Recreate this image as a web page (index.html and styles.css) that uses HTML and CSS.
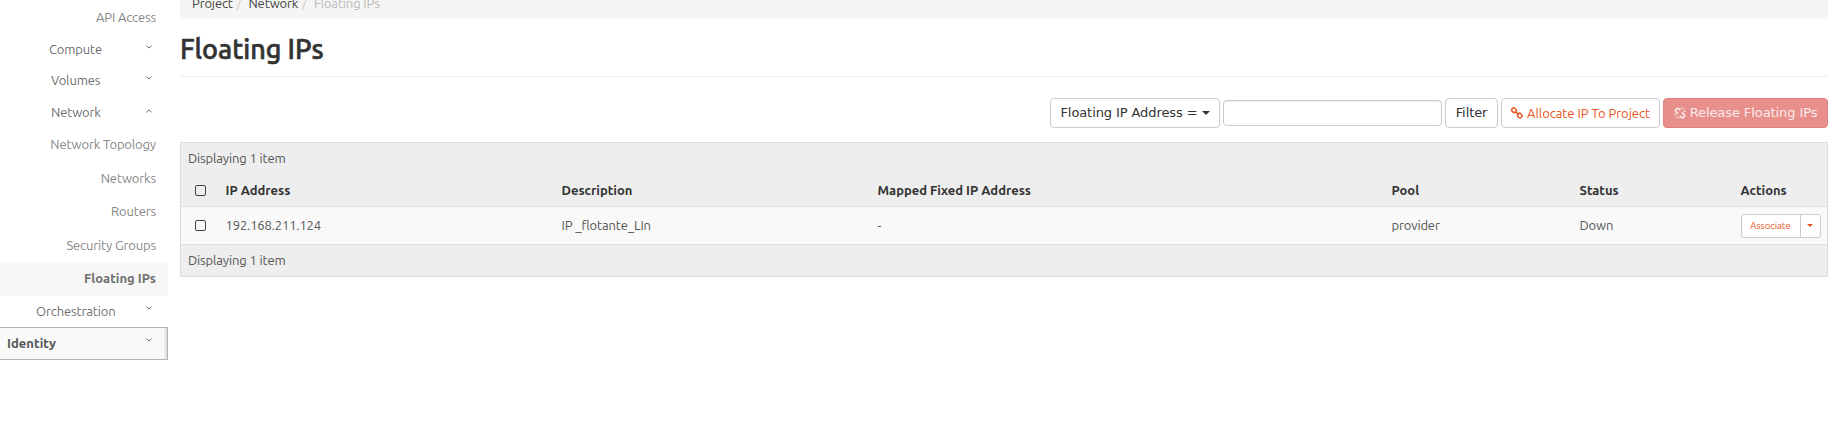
FILE: index.html
```html
<!DOCTYPE html>
<html lang="en">
<head>
<meta charset="utf-8">
<title>Floating IPs</title>
<link rel="stylesheet" href="styles.css">
</head>
<body>
<div class="layout">
  <nav class="sidebar">
    <a class="item api">API Access</a>
    <a class="group compute"><span>Compute</span><svg class="chev" viewBox="0 0 6 4"><path d="M.5.7 3 3.100 5.500.7"/></svg></a>
    <a class="group volumes"><span>Volumes</span><svg class="chev" viewBox="0 0 6 4"><path d="M.5.7 3 3.100 5.500.7"/></svg></a>
    <a class="group network"><span>Network</span><svg class="chev" viewBox="0 0 6 4"><path d="M.5 3.300 3 .9 5.500 3.300"/></svg></a>
    <a class="item topology">Network Topology</a>
    <a class="item networks">Networks</a>
    <a class="item routers">Routers</a>
    <a class="item security">Security Groups</a>
    <a class="item active">Floating IPs</a>
    <a class="group orchestration"><span>Orchestration</span><svg class="chev" viewBox="0 0 6 4"><path d="M.5.7 3 3.100 5.500.7"/></svg></a>
    <a class="group identity"><span>Identity</span><svg class="chev" viewBox="0 0 6 4"><path d="M.5.7 3 3.100 5.500.7"/></svg></a>
  </nav>
  <main class="content">
    <div class="crumbs"><a>Project</a><i>/</i><a>Network</a><i>/</i><span>Floating IPs</span></div>
    <h1>Floating IPs</h1>
    <div class="toolbar">
      <button class="btn select">Floating IP Address = <b class="caret"></b></button>
      <input class="search" type="text" aria-label="Filter value">
      <button class="btn filter">Filter</button>
      <a class="btn allocate"><svg class="ico" viewBox="0 0 12 12"><g fill="none" stroke="currentColor" stroke-width="1.500"><rect x="-2.300" y="-2" width="4.600" height="4" rx="1.600" transform="translate(3 3.200) rotate(45)"/><rect x="-2.300" y="-2" width="4.600" height="4" rx="1.600" transform="translate(8.800 8.600) rotate(45)"/><path d="M4.500 4.500 7.500 7.500"/></g></svg><span>Allocate IP To Project</span></a>
      <button class="btn release"><svg class="ico" viewBox="0 0 12 12"><g fill="none" stroke="currentColor" stroke-width="1.700"><path d="M6.300 3.200 5 1.900Q3.700.7 2.300 1.900T1.900 4.700L4.200 6.700M5.700 8.800 7 10.100Q8.300 11.300 9.700 10.100T10.100 7.300L7.800 5.300"/><path stroke-width=".9" d="M7.700 0V2.400M9 3 10.800 1.200M9.400 4.400H12M0 7.600H2.600M3 9 1.200 10.800M4.300 9.600V12"/></g></svg><span>Release Floating IPs</span></button>
    </div>
    <table>
      <colgroup><col class="k0"><col class="k1"><col class="k2"><col class="k3"><col class="k4"><col class="k5"><col class="k6"></colgroup>
      <thead>
        <tr class="count"><td colspan="7">Displaying 1 item</td></tr>
        <tr class="heads"><th><i class="box"></i></th><th>IP Address</th><th>Description</th><th>Mapped Fixed IP Address</th><th>Pool</th><th>Status</th><th>Actions</th></tr>
      </thead>
      <tbody>
        <tr class="row"><td><i class="box"></i></td><td>192.168.211.124</td><td>IP _flotante_LIn</td><td>-</td><td>provider</td><td>Down</td><td class="cell-actions"><div class="actions"><a class="assoc">Associate</a><a class="more"><b class="caret"></b></a></div></td></tr>
      </tbody>
      <tfoot><tr class="foot"><td colspan="7">Displaying 1 item</td></tr></tfoot>
    </table>
  </main>
</div>
</body>
</html>
```
FILE: styles.css
```css
* { box-sizing: border-box; }
body { margin: 0; background: #fff; color: #555; font: 13px/18px "Ubuntu", "Noto Sans", sans-serif; letter-spacing: -.14px; overflow: hidden; }
.layout { display: flex; }
.sidebar { width: 168px; flex: none; display: flex; flex-direction: column; color: #6f6f6f; }
.item { height: 33px; line-height: 33px; padding-right: 12px; text-align: right; white-space: nowrap; color: #888; }
.item.api { line-height: 35px; }
.item.networks, .item.security, .item.active { height: 34px; }
.item.networks, .item.security { line-height: 34px; }
.item.active { background: #f7f7f7; color: #6f6f6f; font-weight: 700; letter-spacing: 0; }
.group { height: 32px; line-height: 32px; display: flex; justify-content: flex-end; padding-right: 16px; white-space: nowrap; }
.group span { margin-right: auto; }
.chev { width: 6px; height: 4px; margin-top: 12px; fill: none; stroke: #666; stroke-width: 1; }
.compute { padding-left: 49px; height: 31px; }
.volumes, .network { padding-left: 51px; }
.network .chev { margin-top: 13px; }
.orchestration { padding-left: 36px; height: 31px; line-height: 31px; }
.orchestration .chev { margin-top: 10px; }
.identity { height: 33px; line-height: 31px; padding-left: 7px; padding-right: 15px; border: 1px solid #b3b3b3; border-left: 0; background: #f9f9f9; font-weight: 700; letter-spacing: .05px; color: #555; box-shadow: inset -3px 0 2px -1px #ddd; }
.identity .chev { margin-top: 10px; }
.content { width: 1648px; margin-left: 12px; }
.crumbs { height: 19px; line-height: 7px; background: #f5f5f5; border-radius: 0 0 4px 4px; padding-left: 12px; display: flex; white-space: nowrap; color: #bbb; }
.crumbs a { color: #444; }
.crumbs i { font-style: normal; color: #ccc; margin: 0 7px 0 4px; }
h1 { margin: 0; height: 58px; border-bottom: 1px solid #eee; color: #333; font: 500 27px/61px "Ubuntu", "Noto Sans", sans-serif; letter-spacing: -.05px; -webkit-text-stroke: .6px #333; }
.toolbar { display: flex; justify-content: flex-end; align-items: center; gap: 3px; margin: 21px 0 14px; height: 30px; }
.btn { height: 30px; border: 1px solid #ccc; border-radius: 4px; background: #fff; padding: 0; color: #333; font: 13px/28px "DejaVu Sans", sans-serif; letter-spacing: -.09px; display: flex; align-items: center; justify-content: center; white-space: nowrap; }
.caret { display: inline-block; border: 4px solid transparent; border-top-color: currentColor; border-bottom: 0; margin-left: 4px; }
.select { width: 170px; }
.search { width: 219px; height: 26px; border: 1px solid #ccc; border-radius: 4px; padding: 0 6px; box-shadow: inset 0 1px 1px rgba(0,0,0,.075); }
.filter { width: 53px; }
.allocate { width: 159px; color: #e95420; font-family: "Ubuntu", "Noto Sans", sans-serif; letter-spacing: -.04px; }
.release { width: 165px; color: #faeaea; background: #e88f8c; border-color: #e27e7b; }
.ico { width: 12px; height: 12px; margin-right: 4px; overflow: visible; }
table { width: 1647px; height: 135px; table-layout: fixed; border-collapse: collapse; border: 1px solid #ddd; }
td, th { padding: 0; text-align: left; white-space: nowrap; }
th { letter-spacing: 0; }
.k0 { width: 45px; }
.k1 { width: 336px; }
.k2 { width: 316px; }
.k3 { width: 514px; }
.k4 { width: 188px; }
.k5 { width: 161px; }
.k6 { width: 87px; }
.count, .heads, .foot { background: #eee; }
.count { height: 32px; }
.heads { height: 32px; color: #333; border-bottom: 1px solid #ddd; }
.row { height: 38px; background: #f9f9f9; border-bottom: 1px solid #ddd; }
.row td { padding-bottom: 1px; }
.row .cell-actions { padding-bottom: 0; }
.foot { height: 32px; }
.count td, .foot td { padding: 0 0 2px 7px; }
.box { display: block; width: 11px; height: 11px; border: 1px solid #444; border-radius: 2px; margin-left: 14px; }
.actions { display: flex; width: 80px; height: 24px; border: 1px solid #ccc; border-radius: 3px; background: #fff; color: #e95420; font-size: 9.500px; line-height: 22px; letter-spacing: 0; }
.assoc { width: 59px; text-align: center; border-right: 1px solid #ccc; }
.more { flex: 1; display: flex; align-items: center; justify-content: center; }
.more .caret { margin: 0; border-width: 3px 3px 0; }
```
